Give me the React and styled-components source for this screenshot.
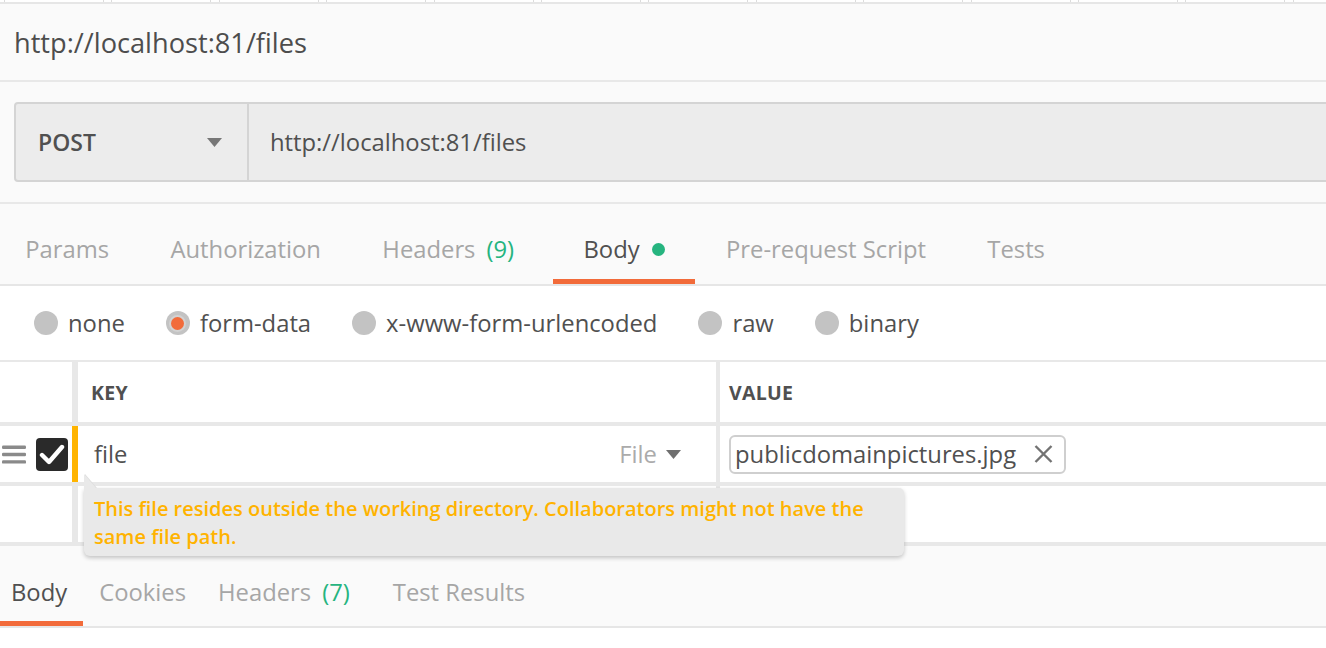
import React from "react";
import styled, { createGlobalStyle } from "styled-components";

const GlobalStyle = createGlobalStyle`
  html, body { margin: 0; padding: 0; background: #ffffff; }
  body { font-family: "Open Sans", "Noto Sans", sans-serif; overflow: hidden; }
  * { box-sizing: border-box; }
`;

const Page = styled.div`
  width: 1326px;
  height: 648px;
  overflow: hidden;
  background: #ffffff;
  color: #505050;
`;

const TopStrip = styled.div`
  display: flex;
  gap: 7.4px;
  padding-left: 4px;
  height: 4px;
  border-bottom: 2px solid #e6e6e6;
  background: #ffffff;
  overflow: hidden;
`;

const StripCell = styled.div`
  flex: none;
  width: 100px;
  height: 2px;
  border-left: 1px solid #dcdcdc;
  border-right: 1px solid #dcdcdc;
`;

const Header = styled.div`
  height: 78px;
  display: flex;
  align-items: center;
  padding-left: 14px;
  background: #fafafa;
  border-bottom: 2px solid #e8e8e8;
`;

const Title = styled.div`
  font-size: 27.2px;
  color: #4d4d4d;
`;

const RequestSection = styled.div`
  background: #fafafa;
  padding: 20px 0 20px 14px;
  border-bottom: 2px solid #e8e8e8;
`;

const UrlGroup = styled.div`
  display: flex;
  height: 80px;
  margin-right: -12px;
  border: 2px solid #d4d4d4;
  border-radius: 4px 0 0 4px;
  background: #ececec;
`;

const MethodSelect = styled.div`
  flex: none;
  width: 233px;
  display: flex;
  align-items: center;
  justify-content: space-between;
  padding: 0 25px 0 22px;
  border-right: 2px solid #d4d4d4;
  font-size: 23px;
  font-weight: 600;
  color: #505050;
`;

const UrlText = styled.div`
  display: flex;
  align-items: center;
  padding-left: 21px;
  font-size: 23.8px;
  color: #505050;
`;

const Caret = ({ color = "#777777" }) => (
  <svg width="15" height="9" viewBox="0 0 15 9">
    <path d="M0 0 H15 L7.5 9 Z" fill={color} />
  </svg>
);

const TabBar = styled.div`
  height: 82px;
  background: #fafafa;
  border-bottom: 2px solid #e6e6e6;
  overflow: hidden;
`;

const TabList = styled.div`
  display: flex;
  height: 80px;
  margin-left: ${(p) => p.$offset}px;
`;

const Tab = styled.div`
  display: flex;
  align-items: center;
  height: 100%;
  padding: ${(p) => p.$padTop}px ${(p) => p.$padX}px 0;
  font-size: 23.8px;
  white-space: nowrap;
  color: ${(p) => (p.$active ? "#505050" : "#a6a6a6")};
  border-bottom: 5px solid ${(p) => (p.$active ? "#f26b3a" : "transparent")};
`;

const Count = styled.span`
  color: #26b47f;
  margin: 0 ${(p) => p.$after}px 0 11px;
`;

const Dot = styled.span`
  width: 13px;
  height: 13px;
  margin-left: 12px;
  border-radius: 50%;
  background: #26b47f;
`;

const BodyTypes = styled.div`
  height: 76px;
  display: flex;
  align-items: center;
  gap: 41px;
  padding-left: 34px;
  background: #ffffff;
  border-bottom: 2px solid #e8e8e8;
`;

const RadioOption = styled.div`
  display: flex;
  align-items: center;
  gap: 10px;
  font-size: 23.8px;
  color: #505050;
`;

const RadioCircle = styled.span`
  width: 24px;
  height: 24px;
  border-radius: 50%;
  background: #c3c3c3;
  display: flex;
  align-items: center;
  justify-content: center;
  &::after {
    content: "";
    display: ${(p) => (p.$checked ? "block" : "none")};
    width: 13px;
    height: 13px;
    border-radius: 50%;
    background: #f26b3a;
    box-shadow: 0 0 0 2px #d2d2d2;
  }
`;

const Row = styled.div`
  position: relative;
  display: flex;
  height: ${(p) => p.$h}px;
  border-bottom: 4px solid #e8e8e8;
  background: #ffffff;
`;

const LeadCell = styled.div`
  flex: none;
  width: 72px;
  display: flex;
  align-items: center;
  gap: 10px;
  padding-left: 2px;
`;

const KeyCell = styled.div`
  flex: none;
  width: 644px;
  display: flex;
  align-items: center;
  justify-content: space-between;
  padding: 0 35px 0 ${(p) => p.$padL}px;
  border-left: 6px solid ${(p) => p.$accent || "#e8e8e8"};
`;

const ValueCell = styled.div`
  flex: 1;
  display: flex;
  align-items: center;
  padding-left: 9px;
  border-left: 4px solid #e8e8e8;
`;

const ColumnLabel = styled.span`
  font-size: 19.5px;
  font-weight: 700;
  color: #505050;
  letter-spacing: 0.3px;
`;

const CellText = styled.span`
  font-size: 23.8px;
  color: #505050;
`;

const TypeSelect = styled.span`
  display: flex;
  align-items: center;
  gap: 9px;
  font-size: 23.8px;
  color: #ababab;
`;

const Checkbox = styled.span`
  flex: none;
  width: 32px;
  height: 33px;
  border-radius: 4px;
  background: #2a2a2a;
  display: flex;
  align-items: center;
  justify-content: center;
`;

const FileChip = styled.div`
  display: flex;
  align-items: center;
  gap: 18px;
  height: 39px;
  padding: 0 11px 0 4px;
  border: 2px solid #cfcfcf;
  border-radius: 6px;
  font-size: 23.8px;
  color: #505050;
`;

const Tooltip = styled.div`
  position: absolute;
  left: 84px;
  top: 62px;
  width: 820px;
  height: 68px;
  padding: 7px 10px 0 10px;
  background: #e9e9e9;
  border-radius: 0 5px 6px 6px;
  box-shadow: 0 2px 4px rgba(0, 0, 0, 0.22);
  font-size: 20px;
  font-weight: 600;
  line-height: 28px;
  color: #ffb300;
  z-index: 2;
  &::before {
    content: "";
    position: absolute;
    left: 0;
    top: -14px;
    width: 0;
    height: 0;
    border-left: 12px solid #e9e9e9;
    border-top: 14px solid transparent;
    filter: drop-shadow(1px 0 0 #dddddd);
  }
`;

const ResponseBar = styled.div`
  height: 82px;
  background: #fafafa;
  border-bottom: 2px solid #e6e6e6;
  overflow: hidden;
`;

const Handle = () => (
  <svg width="24" height="20" viewBox="0 0 24 20">
    <rect x="0" y="1.5" width="24" height="3.4" rx="1.2" fill="#8a8a8a" />
    <rect x="0" y="8.8" width="24" height="3.4" rx="1.2" fill="#8a8a8a" />
    <rect x="0" y="16.2" width="24" height="3.4" rx="1.2" fill="#8a8a8a" />
  </svg>
);

const CheckMark = () => (
  <svg width="26" height="22" viewBox="0 0 26 22">
    <path
      d="M3 12 L10 19 L23 4"
      fill="none"
      stroke="#ffffff"
      strokeWidth="4.4"
      strokeLinecap="round"
      strokeLinejoin="round"
    />
  </svg>
);

const CloseX = () => (
  <svg width="19" height="18" viewBox="0 0 19 18">
    <path d="M1.5 1 L17.5 17 M17.5 1 L1.5 17" stroke="#737373" strokeWidth="2.4" />
  </svg>
);

const requestTabs = [
  { label: "Params" },
  { label: "Authorization" },
  { label: "Headers", count: "(9)" },
  { label: "Body", active: true, dot: true },
  { label: "Pre-request Script" },
  { label: "Tests" },
];

const responseTabs = [
  { label: "Body", active: true },
  { label: "Cookies" },
  { label: "Headers", count: "(7)" },
  { label: "Test Results" },
];

const bodyTypes = [
  { label: "none" },
  { label: "form-data", checked: true },
  { label: "x-www-form-urlencoded" },
  { label: "raw" },
  { label: "binary" },
];

export default function App() {
  return (
    <Page>
      <GlobalStyle />
      <TopStrip>
        {Array.from({ length: 13 }).map((_, i) => (
          <StripCell key={i} />
        ))}
      </TopStrip>
      <Header>
        <Title>http://localhost:81/files</Title>
      </Header>
      <RequestSection>
        <UrlGroup>
          <MethodSelect>
            POST
            <Caret />
          </MethodSelect>
          <UrlText>http://localhost:81/files</UrlText>
        </UrlGroup>
      </RequestSection>
      <TabBar>
        <TabList $offset={-5.5}>
          {requestTabs.map((t) => (
            <Tab key={t.label} $active={t.active} $padX={30.7} $padTop={15}>
              {t.label}
              {t.count && <Count $after={8}>{t.count}</Count>}
              {t.dot && <Dot />}
            </Tab>
          ))}
        </TabList>
      </TabBar>
      <BodyTypes>
        {bodyTypes.map((b) => (
          <RadioOption key={b.label}>
            <RadioCircle $checked={b.checked} />
            {b.label}
          </RadioOption>
        ))}
      </BodyTypes>
      <Row $h={64}>
        <LeadCell />
        <KeyCell $padL={13}>
          <ColumnLabel>KEY</ColumnLabel>
        </KeyCell>
        <ValueCell>
          <ColumnLabel>VALUE</ColumnLabel>
        </ValueCell>
      </Row>
      <Row $h={60}>
        <LeadCell>
          <Handle />
          <Checkbox>
            <CheckMark />
          </Checkbox>
        </LeadCell>
        <KeyCell $padL={16} $accent="#ffb400">
          <CellText>file</CellText>
          <TypeSelect>
            File
            <Caret color="#6f6f6f" />
          </TypeSelect>
        </KeyCell>
        <ValueCell>
          <FileChip>
            publicdomainpictures.jpg
            <CloseX />
          </FileChip>
        </ValueCell>
        <Tooltip>
          This file resides outside the working directory. Collaborators might not have the
          <br />
          same file path.
        </Tooltip>
      </Row>
      <Row $h={60}>
        <LeadCell />
        <KeyCell $padL={16} />
        <ValueCell />
      </Row>
      <ResponseBar>
        <TabList $offset={-5}>
          {responseTabs.map((t) => (
            <Tab key={t.label} $active={t.active} $padX={16} $padTop={16}>
              {t.label}
              {t.count && <Count $after={11}>{t.count}</Count>}
            </Tab>
          ))}
        </TabList>
      </ResponseBar>
    </Page>
  );
}
